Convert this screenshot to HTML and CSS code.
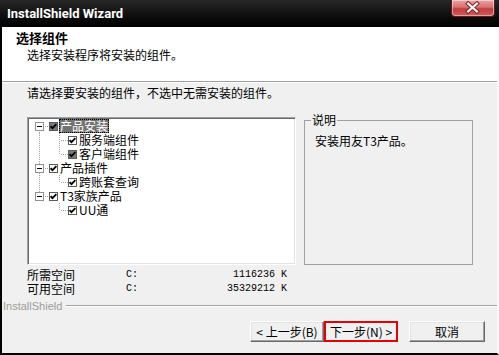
FILE: index.html
```html
<!DOCTYPE html>
<html lang="zh-CN">
<head>
<meta charset="utf-8">
<title>InstallShield Wizard</title>
<link rel="stylesheet" href="styles.css">
</head>
<body>
<div class="win">
  <div class="titlebar">
    <span class="title">InstallShield Wizard</span>
    <span class="close">
      <svg width="44" height="17" viewBox="0 0 44 17">
        <path d="M17.5 4.5 L26.5 12.5 M26.5 4.5 L17.5 12.5" stroke="#6b2525" stroke-width="4.2" stroke-linecap="square" fill="none"/>
        <path d="M17.5 4.5 L26.5 12.5 M26.5 4.5 L17.5 12.5" stroke="#f6eef0" stroke-width="2.2" stroke-linecap="square" fill="none"/>
      </svg>
    </span>
  </div>
  <div class="main">
    <div class="header">
      <div class="h-title">选择组件</div>
      <div class="h-sub">选择安装程序将安装的组件。</div>
    </div>
    <div class="body">
      <div class="instr">请选择要安装的组件，不选中无需安装的组件。</div>
      <div class="panels">
        <div class="tree">
          <div class="row">
            <span class="rc first"><span class="exp"><span class="minus"></span></span></span>
            <span class="hl"></span>
            <span class="cb mixed"><svg width="9" height="9" viewBox="0 0 9 9"><path d="M1.6 4.2 L3.5 6.2 L7.4 2.2" stroke="#000" stroke-width="1.8" fill="none"/></svg></span>
            <span class="lbl sel">产品安装</span>
          </div>
          <div class="row">
            <span class="rc mid"></span>
            <span class="sp"></span>
            <span class="br"></span>
            <span class="cb"><svg width="9" height="9" viewBox="0 0 9 9"><path d="M1.6 4.2 L3.5 6.2 L7.4 2.2" stroke="#000" stroke-width="1.8" fill="none"/></svg></span>
            <span class="lbl">服务端组件</span>
          </div>
          <div class="row">
            <span class="rc mid"></span>
            <span class="sp"></span>
            <span class="br last"></span>
            <span class="cb mixed"><svg width="9" height="9" viewBox="0 0 9 9"><path d="M1.6 4.2 L3.5 6.2 L7.4 2.2" stroke="#000" stroke-width="1.8" fill="none"/></svg></span>
            <span class="lbl">客户端组件</span>
          </div>
          <div class="row">
            <span class="rc mid"><span class="exp"><span class="minus"></span></span></span>
            <span class="hl"></span>
            <span class="cb"><svg width="9" height="9" viewBox="0 0 9 9"><path d="M1.6 4.2 L3.5 6.2 L7.4 2.2" stroke="#000" stroke-width="1.8" fill="none"/></svg></span>
            <span class="lbl">产品插件</span>
          </div>
          <div class="row">
            <span class="rc mid"></span>
            <span class="sp"></span>
            <span class="br last"></span>
            <span class="cb"><svg width="9" height="9" viewBox="0 0 9 9"><path d="M1.6 4.2 L3.5 6.2 L7.4 2.2" stroke="#000" stroke-width="1.8" fill="none"/></svg></span>
            <span class="lbl">跨账套查询</span>
          </div>
          <div class="row">
            <span class="rc last"><span class="exp"><span class="minus"></span></span></span>
            <span class="hl"></span>
            <span class="cb"><svg width="9" height="9" viewBox="0 0 9 9"><path d="M1.6 4.2 L3.5 6.2 L7.4 2.2" stroke="#000" stroke-width="1.8" fill="none"/></svg></span>
            <span class="lbl">T3家族产品</span>
          </div>
          <div class="row">
            <span class="rc"></span>
            <span class="sp"></span>
            <span class="br last"></span>
            <span class="cb"><svg width="9" height="9" viewBox="0 0 9 9"><path d="M1.6 4.2 L3.5 6.2 L7.4 2.2" stroke="#000" stroke-width="1.8" fill="none"/></svg></span>
            <span class="lbl">UU通</span>
          </div>
        </div>
        <fieldset class="group">
          <legend>说明</legend>
          <div class="desc">安装用友T3产品。</div>
        </fieldset>
      </div>
      <div class="disk">
        <span>所需空间</span><span class="mono">C:</span><span class="mono num">1116236 K</span>
        <span>可用空间</span><span class="mono">C:</span><span class="mono num">35329212 K</span>
      </div>
      <div class="brand">
        <span class="brand-text">InstallShield</span>
        <span class="brand-line"></span>
      </div>
      <div class="buttons">
        <button class="btn">&lt; 上一步(B)</button>
        <button class="btn next">下一步(N) &gt;</button>
        <button class="btn cancel">取消</button>
      </div>
    </div>
  </div>
</div>
</body>
</html>
```
FILE: styles.css
```css
html, body {
  margin: 0;
  padding: 0;
  background: #000;
}
body {
  width: 499px;
  height: 355px;
  overflow: hidden;
  font-family: "Noto Sans CJK SC", "Liberation Sans", sans-serif;
  font-size: 12px;
  color: #000;
}
.win {
  width: 499px;
  height: 355px;
  display: flex;
  flex-direction: column;
}
.titlebar {
  height: 27px;
  flex: none;
  background: linear-gradient(#262626, #0a0a0a 70%, #000);
  display: flex;
  justify-content: space-between;
  align-items: flex-start;
}
.title {
  padding: 6px 0 0 7px;
  color: #fff;
  font: 700 13px/15px Roboto, "Liberation Sans", sans-serif;
}
.close {
  margin-right: 4px;
  width: 44px;
  height: 17px;
  box-sizing: border-box;
  border: 1px solid #5a1e1e;
  border-top: none;
  border-radius: 0 0 4px 4px;
  background: linear-gradient(#eba3a3, #d86f6f 45%, #c23d3d 55%, #d45a5a);
  box-shadow: inset 0 0 0 1px rgba(255,255,255,0.45);
  display: flex;
}
.close svg { display: block; margin: -1px 0 0 -1px; }
.main {
  flex: 1;
  display: flex;
  flex-direction: column;
  border-left: 2px solid #000;
  border-right: 2px solid #fafafa;
  border-bottom: 2px solid #000;
}
.header {
  height: 55px;
  flex: none;
  box-sizing: border-box;
  background: #fff;
  border-bottom: 1px solid #a0a0a0;
  padding: 3px 0 0 14px;
}
.h-title {
  font-weight: 700;
  font-size: 13px;
  line-height: 16px;
}
.h-sub {
  margin: 2px 0 0 11px;
  line-height: 14px;
}
.body {
  flex: 1;
  background: #f0f0f0;
  border-top: 1px solid #fff;
  display: flex;
  flex-direction: column;
}
.instr {
  margin: 3px 0 0 25px;
  line-height: 14px;
}
.panels {
  margin: 17px 0 0 25px;
  display: flex;
  align-items: flex-start;
}
.tree {
  width: 269px;
  height: 148px;
  box-sizing: border-box;
  background: #fff;
  border: 1px solid;
  border-color: #a0a0a0 #fff #fff #a0a0a0;
  box-shadow: inset 1px 1px 0 #696969, inset -1px -1px 0 #e3e3e3;
  padding: 1px 0 0 1px;
}
.row {
  height: 14px;
  display: flex;
  align-items: center;
  padding-left: 6px;
  line-height: 14px;
}
.rc {
  width: 9px;
  align-self: stretch;
  display: flex;
  align-items: center;
  flex: none;
}
.rc.mid {
  background: repeating-linear-gradient(to bottom, #a0a0a0 0 1px, transparent 1px 2px) 4px 0 / 1px 100% no-repeat;
}
.rc.first {
  background: repeating-linear-gradient(to bottom, #a0a0a0 0 1px, transparent 1px 2px) 4px 7px / 1px 7px no-repeat;
}
.rc.last {
  background: repeating-linear-gradient(to bottom, #a0a0a0 0 1px, transparent 1px 2px) 4px 0 / 1px 7px no-repeat;
}
.exp {
  width: 9px;
  height: 9px;
  box-sizing: border-box;
  border: 1px solid #919191;
  background: #fff;
  display: flex;
  align-items: center;
  justify-content: center;
}
.minus {
  width: 5px;
  height: 1px;
  background: #000;
}
.hl {
  width: 5px;
  align-self: stretch;
  flex: none;
  background: repeating-linear-gradient(to right, #a0a0a0 0 1px, transparent 1px 2px) 1px 7px / 4px 1px no-repeat;
}
.sp {
  width: 15px;
  flex: none;
}
.br {
  width: 9px;
  align-self: stretch;
  flex: none;
  background:
    repeating-linear-gradient(to right, #a0a0a0 0 1px, transparent 1px 2px) 2px 7px / 7px 1px no-repeat,
    repeating-linear-gradient(to bottom, #a0a0a0 0 1px, transparent 1px 2px) 0 0 / 1px 100% no-repeat;
}
.br.last {
  background:
    repeating-linear-gradient(to right, #a0a0a0 0 1px, transparent 1px 2px) 2px 7px / 7px 1px no-repeat,
    repeating-linear-gradient(to bottom, #a0a0a0 0 1px, transparent 1px 2px) 0 0 / 1px 8px no-repeat;
}
.cb {
  width: 9px;
  height: 9px;
  flex: none;
  box-sizing: border-box;
  border: 1px solid #5a5a5a;
  background: #fff;
  position: relative;
  overflow: hidden;
}
.cb svg {
  display: block;
  margin: -1px 0 0 -1px;
}
.cb.mixed { background: #7a7a7a; }
.lbl {
  margin-left: 1px;
  padding: 0 1px;
  height: 14px;
  line-height: 14px;
  box-sizing: border-box;
  white-space: nowrap;
}
.lbl.sel {
  background: #737373;
  color: #fff;
  outline: 1px dotted #000;
  outline-offset: -1px;
}
.group {
  margin: -3px 0 0 8px;
  width: 169px;
  height: 151px;
  box-sizing: border-box;
  border: 1px solid #a0a0a0;
  padding: 8px 10px 0 10px;
  min-width: 0;
}
.group legend {
  margin-left: -4px;
  padding: 0 1px;
  line-height: 12px;
}
.desc {
  line-height: 14px;
}
.disk {
  margin: 3px 0 0 25px;
  display: grid;
  grid-template-columns: 99px 30px 131px;
  line-height: 14px;
}
.mono {
  font-family: "Liberation Mono", monospace;
  font-size: 10px;
}
.num { text-align: right; }
.brand {
  margin-top: 4px;
  height: 12px;
  display: flex;
  align-items: center;
  padding-left: 1px;
}
.brand-text {
  font: 11px/12px "Liberation Sans", sans-serif;
  color: #9c9c9c;
}
.brand-line {
  flex: 1;
  margin-left: 4px;
  height: 1px;
  background: #a0a0a0;
  border-bottom: 1px solid #fff;
}
.buttons {
  margin-top: 9px;
  display: flex;
  justify-content: flex-end;
  padding-right: 12px;
}
.btn {
  width: 74px;
  height: 21px;
  margin: 0;
  padding: 0;
  font-family: "Noto Sans CJK SC", "Liberation Sans", sans-serif;
  font-size: 12px;
  color: #000;
  background: #f0f0f0;
  border: 1px solid;
  border-color: #fff #696969 #696969 #fff;
  box-shadow: inset -1px -1px 0 #a0a0a0, inset 1px 1px 0 #e3e3e3;
  border-radius: 0;
  line-height: 17px;
}
.btn.next {
  border: 2px solid #e60000;
  box-shadow: none;
}
.btn.cancel {
  width: 76px;
  margin-left: 11px;
}
```
